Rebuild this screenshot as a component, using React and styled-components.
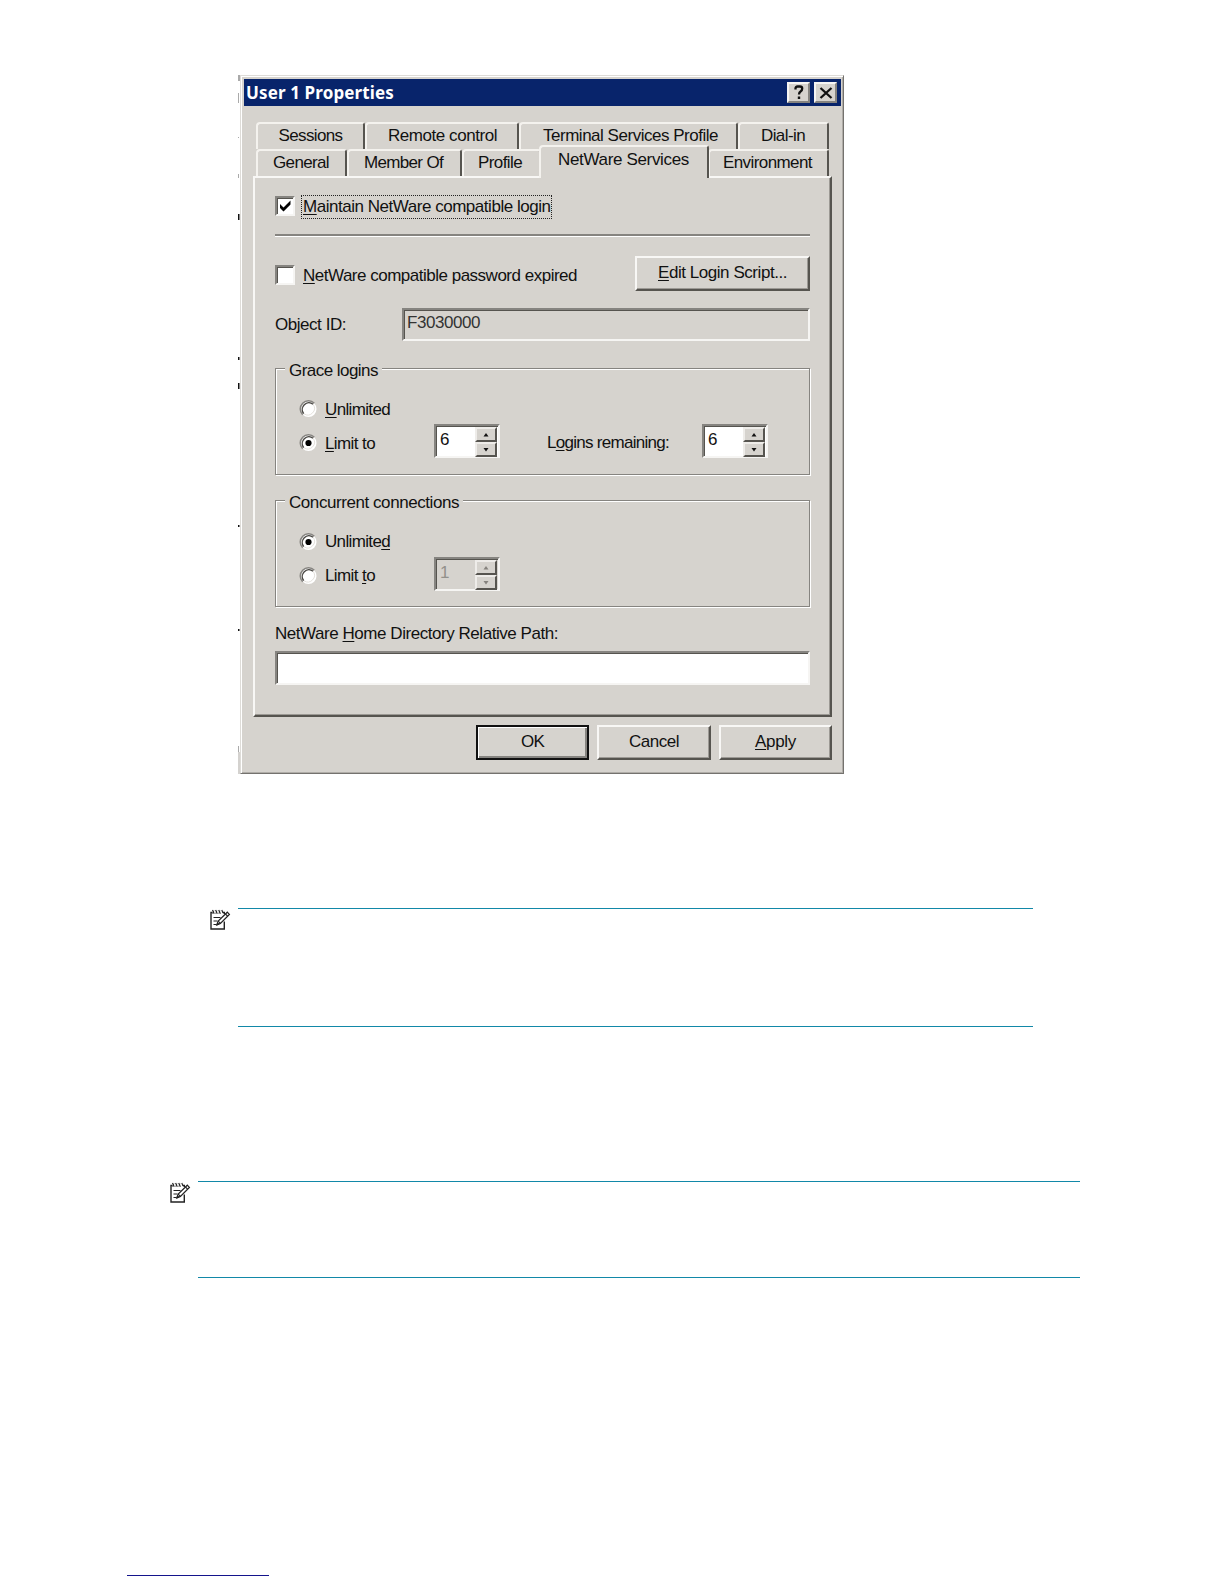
import React, { useLayoutEffect, useRef, useState } from 'react'
import styled, { createGlobalStyle, css } from 'styled-components'

const FACE = '#d6d3ce'
const SHADOW = '#868480'
const DARK = '#56544f'

const GlobalStyle = createGlobalStyle`
    * {
        box-sizing: border-box;
    }

    body {
        margin: 0;
        background: #fff;
    }
`

const Page = styled.div`
    width: 1224px;
    height: 1584px;
    overflow: hidden;

    display: flex;
    flex-direction: column;
    align-items: flex-start;
    padding-top: 75px;
`

const Screen = styled.div`
    display: flex;
    height: 699px;
    margin-left: 238px;
`

const EdgeStrip = styled.svg`
    display: block;
    width: 2px;
    height: 699px;
`

const Window = styled.div`
    width: 604px;
    padding: 3px 2px 0 3px;

    display: flex;
    flex-direction: column;

    font-family: 'Liberation Sans', Arial, sans-serif;
    font-size: 17px;
    line-height: 20px;
    color: #111;

    background: ${FACE};
    border: 1px solid;
    border-color: #dedcd8 #74726e #74726e #dedcd8;
    box-shadow: inset 1px 1px 0 #fff, inset -1px -1px 0 #b0ada8;
`

const TitleBar = styled.div`
    height: 27px;
    flex-shrink: 0;
    padding: 0 4px 0 2px;

    display: flex;
    align-items: center;

    font-family: 'Noto Sans', sans-serif;
    font-weight: bold;
    font-size: 17px;
    color: #fff;
    background: #08246b;
`

const TitleButtons = styled.div`
    display: flex;
    gap: 4px;
    margin-left: auto;
`

const TitleButton = styled.div`
    width: 23px;
    height: 21px;

    display: flex;
    align-items: center;
    justify-content: center;

    background: ${FACE};
    border: 2px solid;
    border-color: #f6f5f3 ${SHADOW} ${SHADOW} #f6f5f3;
`

const TabRow = styled.div`
    display: flex;
    height: 27px;
    flex-shrink: 0;
    margin-top: ${({$top}) => $top || 0}px;
    margin-left: 12px;
`

const Tab = styled.div`
    width: ${({$width}) => $width}px;
    height: 27px;
    padding-top: ${({$top}) => $top || 2}px;
    padding-left: ${({$pad}) => $pad - 2}px;
    flex-shrink: 0;

    background: ${FACE};
    border: 2px solid;
    border-bottom: 0;
    border-color: #f4f2ee ${DARK} transparent #f4f2ee;
    border-radius: 4px 3px 0 0;

    ${({$active}) => $active && css`
        position: relative;
        z-index: 1;
        height: 33px;
        margin: -4px -1px 0 -2px;
        padding-top: 3px;
    `}
`

const Panel = styled.div`
    width: 579px;
    height: 541px;
    flex-shrink: 0;
    margin-left: 9px;
    padding: 17px 20px 0;

    display: flex;
    flex-direction: column;

    border: 2px solid;
    border-color: #f8f7f5 ${DARK} ${DARK} #f8f7f5;
    box-shadow: inset -1px -1px 0 #9c9994;
`

const Row = styled.div`
    display: flex;
    align-items: flex-start;
    justify-content: ${({$spread}) => $spread ? 'space-between' : 'flex-start'};
    width: 535px;
    height: ${({$height}) => $height}px;
    flex-shrink: 0;
    margin-top: ${({$top}) => $top || 0}px;
`

const CheckGroup = styled.div`
    display: flex;
    align-items: flex-start;
`

const Separator = styled.div`
    width: 535px;
    height: 3px;
    margin-top: 15px;
    flex-shrink: 0;
    border-top: 2px solid ${SHADOW};
    border-bottom: 1px solid #fff;
`

const sunken = css`
    border: 2px solid;
    border-color: ${SHADOW} #f6f5f3 #f6f5f3 ${SHADOW};
    box-shadow: inset 1px 1px 0 ${DARK};
`

const CheckBox = styled.div`
    width: 20px;
    height: 20px;
    margin-top: ${({$top}) => $top || 0}px;
    flex-shrink: 0;

    background: #fff;
    ${sunken}

    svg {
        display: block;
    }
`

const LabelBox = styled.div`
    height: 24px;
    margin: ${({$top}) => $top || 0}px 0 0 6px;
    padding: 1px 0 0 1px;
    border: 1px ${({$focused}) => $focused ? 'dotted #222' : 'solid transparent'};
`

const Button = styled.div`
    width: ${({$width}) => $width}px;
    height: 35px;
    padding-top: 5px;
    flex-shrink: 0;

    display: flex;
    justify-content: center;

    border: 2px solid;
    border-color: #f8f7f5 ${DARK} ${DARK} #f8f7f5;
    box-shadow: inset -1px -1px 0 #9c9994;

    ${({$isDefault}) => $isDefault && css`
        border-color: #111;
        box-shadow: inset 1px 1px 0 #fff, inset -2px -2px 0 ${SHADOW};
    `}
`

const Field = styled.div`
    width: ${({$width}) => $width}px;
    height: ${({$height}) => $height}px;
    margin-top: ${({$top}) => $top || 0}px;
    padding: 3px 0 0 3px;
    flex-shrink: 0;

    color: #333;
    background: ${({$readOnly}) => $readOnly ? FACE : '#fff'};
    ${sunken}
`

const Group = styled.div`
    width: 535px;
    height: 107px;
    flex-shrink: 0;
    margin-top: ${({$top}) => $top}px;

    border: 1px solid ${SHADOW};
    box-shadow: inset 1px 1px 0 #fff, 1px 1px 0 #fff;
`

const Legend = styled.div`
    width: fit-content;
    height: 20px;
    margin: -8px 0 0 9px;
    padding: 0 4px 0 4px;
    background: ${FACE};
`

const Option = styled.div`
    display: flex;
    height: 34px;
    padding-left: 22px;
    margin-top: ${({$top}) => $top || 0}px;

    svg {
        flex-shrink: 0;
    }
`

const OptionText = styled.div`
    width: ${({$width}) => $width}px;
    flex-shrink: 0;
    margin-left: ${({$left}) => $left || 0}px;
    margin-top: ${({$top}) => $top || 0}px;
`

const SpinnerBox = styled.div`
    width: 66px;
    height: 34px;
    margin-top: -9px;
    padding: 0 1px 0 4px;
    flex-shrink: 0;

    display: flex;
    justify-content: space-between;

    color: ${({$disabled}) => $disabled ? '#92908b' : '#111'};
    background: ${({$disabled}) => $disabled ? FACE : '#fff'};
    ${sunken}
`

const SpinnerValue = styled.div`
    padding-top: 4px;
`

const SpinnerArrows = styled.div`
    width: 22px;
    height: 30px;
    padding-top: 1px;
`

const Arrow = styled.div`
    height: 15px;
    display: flex;
    align-items: center;
    justify-content: center;

    background: ${FACE};
    border: 2px solid;
    border-color: #eeece9 ${DARK} ${DARK} #eeece9;
`

const ButtonRow = styled.div`
    display: flex;
    gap: 8px;
    margin: 8px 0 0 232px;
`

const Key = styled.span`
    text-decoration: underline;
    text-decoration-thickness: 1px;
    text-underline-offset: 2px;
    text-decoration-skip-ink: none;
`

const TextLine = styled.span`
    display: inline-block;
    white-space: pre;
    vertical-align: top;
`

const Note = styled.div`
    display: flex;
    align-items: flex-start;
    margin-left: ${({$left}) => $left}px;
    margin-top: ${({$top}) => $top}px;
`

const NoteBody = styled.div`
    width: ${({$width}) => $width}px;
    height: ${({$height}) => $height}px;
    margin-left: 7px;
    border-top: 1px solid #1288a8;
    border-bottom: 1px solid #1288a8;
`

const FooterLine = styled.div`
    width: 142px;
    height: 1px;
    margin: 297px 0 0 127px;
    background: #14148c;
`

// spreads the letters so that the line takes the given width
const Text = ({width, children}) => {
    const ref = useRef(null)
    const [spacing, setSpacing] = useState(0)

    useLayoutEffect(() => {
        const natural = ref.current.getBoundingClientRect().width
        setSpacing((width - natural) / ref.current.textContent.length)
    }, [width])

    return <TextLine ref={ref} style={{letterSpacing: `${spacing}px`}}>{children}</TextLine>
}

const Radio = ({checked}) => (
    <svg width="20" height="20" viewBox="0 0 20 20">
        <circle cx="10.5" cy="10" r="8" fill="#fff"/>
        <path d="M4.7 15.8A8.2 8.2 0 0 1 16.3 4.2" fill="none" stroke={SHADOW} strokeWidth="1.6"/>
        <path d="M5.7 14.6A6.7 6.7 0 0 1 15.1 5.2" fill="none" stroke="#4a4844" strokeWidth="1.4"/>
        <path d="M6 14.8A6.7 6.7 0 0 0 15.3 5.5" fill="none" stroke="#e4e1dc" strokeWidth="1"/>
        {checked && <circle cx="10.5" cy="10" r="3.1" fill="#000"/>}
    </svg>
)

const Spinner = ({value, disabled}) => {
    const fill = disabled ? '#85827d' : '#111'
    return (
        <SpinnerBox $disabled={disabled}>
            <SpinnerValue><Text width={9.5}>{value}</Text></SpinnerValue>
            <SpinnerArrows>
                <Arrow><svg width="6" height="4"><path d="M3 0L5.5 3.5H0.5Z" fill={fill}/></svg></Arrow>
                <Arrow><svg width="6" height="4"><path d="M0.5 0H5.5L3 3.5Z" fill={fill}/></svg></Arrow>
            </SpinnerArrows>
        </SpinnerBox>
    )
}

const NoteIcon = () => (
    <svg width="22" height="23" viewBox="0 0 22 23" fill="none" stroke="#222">
        <path d="M3.5 4.5H2V21H15.3V13.5M14 4.5H15.3V6" strokeWidth="1.4"/>
        <path d="M3.5 2L5.2 5.8M6.6 2L8.3 5.8M9.7 2L11.4 5.8M12.8 2L14 5" strokeWidth="1.1"/>
        <path d="M3.5 5.8L5 2.5M6.6 5.8L8 2.5M9.7 5.8L11 2.5" strokeWidth="0.6"/>
        <path d="M4.5 9.5H11.5M4.5 13H8.5M4.5 16.5H7.5" strokeWidth="1.2"/>
        <path d="M7.8 17L9.2 13L18.3 4.2L20.4 6.4L11.4 15.4Z" fill="#fff" strokeWidth="1.2"/>
        <path d="M16.4 6L18.6 8.2M9.2 13L11.4 15.4" strokeWidth="1.1"/>
        <path d="M7.8 17L8.6 14.7L10 16.2Z" fill="#222" strokeWidth="0.8"/>
    </svg>
)

const App = () => {
    return (
        <Page>
            <GlobalStyle/>
            <Screen>
                <EdgeStrip viewBox="0 0 2 699">
                    <path d="M0 0H2V6H0ZM0 18H1V28H0ZM0 62H1V63H0ZM0 99H1V103H0ZM0 671H1V677H0Z" fill="#aaa"/>
                    <path d="M0 139H1.5V145H0ZM0 282H1.5V285H0ZM0 308H1.5V314H0ZM0 450H1.5V452H0ZM0 554H1.5V556H0Z" fill="#111"/>
                    <path d="M0 677H2V699H0Z" fill="#d4d2cf"/>
                </EdgeStrip>
                <Window>
                    <TitleBar>
                        <Text width={148}>User 1 Properties</Text>
                        <TitleButtons>
                            <TitleButton>
                                <svg width="12" height="15" viewBox="0 0 12 15">
                                    <path d="M2.5 4.5V3.5Q2.5 1.5 4.5 1.5H7Q9.2 1.5 9.2 3.5Q9.2 5.3 7.8 6.2Q6 7.4 6 9.5" fill="none" stroke="#111" strokeWidth="2.3"/>
                                    <path d="M4.8 11.5H7.2V14H4.8Z" fill="#111"/>
                                </svg>
                            </TitleButton>
                            <TitleButton>
                                <svg width="14" height="12" viewBox="0 0 14 12">
                                    <path d="M1.5 1L12.5 11M12.5 1L1.5 11" stroke="#111" strokeWidth="2.3"/>
                                </svg>
                            </TitleButton>
                        </TitleButtons>
                    </TitleBar>

                    <TabRow $top={16}>
                        <Tab $width={109} $pad={22.5} $top={2}><Text width={64}>Sessions</Text></Tab>
                        <Tab $width={154} $pad={23} $top={2}><Text width={109}>Remote control</Text></Tab>
                        <Tab $width={219} $pad={24} $top={2}><Text width={175}>Terminal Services Profile</Text></Tab>
                        <Tab $width={91} $pad={23} $top={2}><Text width={44}>Dial-in</Text></Tab>
                    </TabRow>
                    <TabRow>
                        <Tab $width={91} $pad={17}><Text width={56}>General</Text></Tab>
                        <Tab $width={115} $pad={17}><Text width={79}>Member Of</Text></Tab>
                        <Tab $width={79} $pad={16}><Text width={44}>Profile</Text></Tab>
                        <Tab $width={170} $pad={19} $active><Text width={131}>NetWare Services</Text></Tab>
                        <Tab $width={121} $pad={15}><Text width={89}>Environment</Text></Tab>
                    </TabRow>

                    <Panel>
                        <Row $height={24}>
                            <CheckBox $top={1}>
                                <svg width="16" height="16" viewBox="0 0 16 16">
                                    <path d="M3 6V10L6.5 13.5L13.5 6.5V2.5L6.5 9.5Z" fill="#000"/>
                                </svg>
                            </CheckBox>
                            <LabelBox $focused>
                                <Text width={247.5}><Key>M</Key>aintain NetWare compatible login</Text>
                            </LabelBox>
                        </Row>
                        <Separator/>
                        <Row $top={19} $height={35} $spread>
                            <CheckGroup>
                                <CheckBox $top={9}/>
                                <LabelBox $top={8}>
                                    <Text width={274}><Key>N</Key>etWare compatible password expired</Text>
                                </LabelBox>
                            </CheckGroup>
                            <Button $width={175}>
                                <Text width={129}><Key>E</Key>dit Login Script...</Text>
                            </Button>
                        </Row>
                        <Row $top={17} $height={33}>
                            <OptionText $width={127} $top={7}><Text width={71}>Object ID:</Text></OptionText>
                            <Field $width={408} $height={33} $readOnly><Text width={73}>F3030000</Text></Field>
                        </Row>

                        <Group $top={27}>
                            <Legend><Text width={89}>Grace logins</Text></Legend>
                            <Option $top={18}>
                                <Radio/>
                                <OptionText $width={110} $left={7} $top={1}><Text width={65}><Key>U</Key>nlimited</Text></OptionText>
                            </Option>
                            <Option>
                                <Radio checked/>
                                <OptionText $width={109} $left={7} $top={1}><Text width={50}><Key>L</Key>imit to</Text></OptionText>
                                <Spinner value="6"/>
                                <OptionText $width={155} $left={47}><Text width={122}>L<Key>o</Key>gins remaining:</Text></OptionText>
                                <Spinner value="6"/>
                            </Option>
                        </Group>

                        <Group $top={25}>
                            <Legend><Text width={170}>Concurrent connections</Text></Legend>
                            <Option $top={19}>
                                <Radio checked/>
                                <OptionText $width={110} $left={7}><Text width={65}>Unlimite<Key>d</Key></Text></OptionText>
                            </Option>
                            <Option>
                                <Radio/>
                                <OptionText $width={109} $left={7}><Text width={50}>Limit <Key>t</Key>o</Text></OptionText>
                                <Spinner value="1" disabled/>
                            </Option>
                        </Group>

                        <Row $top={17} $height={20}>
                            <Text width={283}>NetWare <Key>H</Key>ome Directory Relative Path:</Text>
                        </Row>
                        <Field $top={7} $width={535} $height={34}/>
                    </Panel>

                    <ButtonRow>
                        <Button $width={113} $isDefault><Text width={23}>OK</Text></Button>
                        <Button $width={114}><Text width={50}>Cancel</Text></Button>
                        <Button $width={113}><Text width={41}><Key>A</Key>pply</Text></Button>
                    </ButtonRow>
                </Window>
            </Screen>

            <Note $left={209} $top={134}>
                <NoteIcon/>
                <NoteBody $width={795} $height={119}/>
            </Note>
            <Note $left={169} $top={154}>
                <NoteIcon/>
                <NoteBody $width={882} $height={97}/>
            </Note>
            <FooterLine/>
        </Page>
    )
}

export default App
